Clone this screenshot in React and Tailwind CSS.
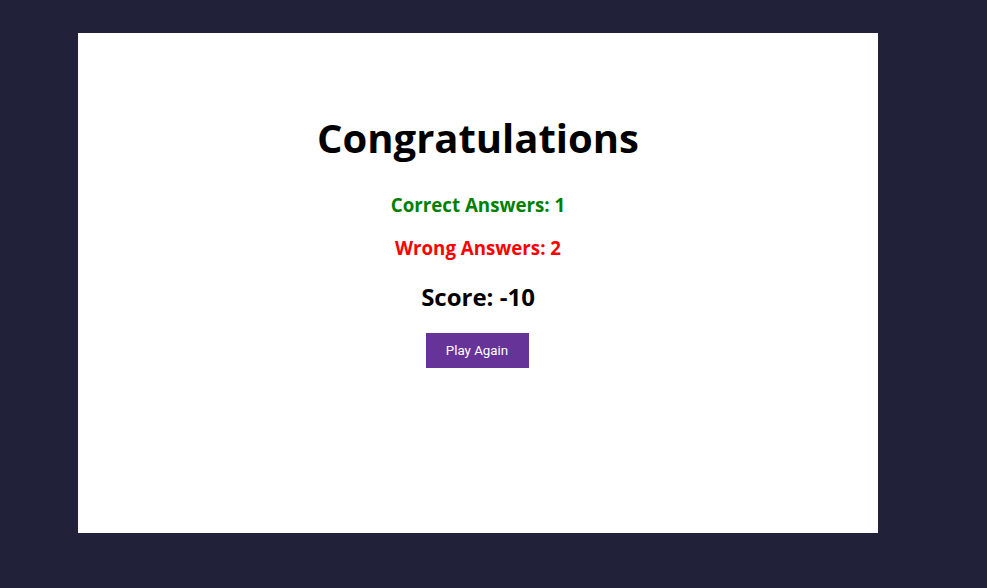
export default function App() {
  return (
    <div className="min-h-screen w-full bg-[#22213a] pt-[33px] pl-[78px]" style={{ fontFamily: "'Open Sans', sans-serif" }}>
      <div className="w-[800px] h-[500px] bg-white flex flex-col items-center pt-[81px]">
        <h1 className="text-[40px] leading-[48px] font-bold text-black">Congratulations</h1>
        <h3 className="mt-[29px] text-[18.72px] leading-[28px] font-bold text-[#008000]">Correct Answers: 1</h3>
        <h3 className="mt-[15px] text-[18.72px] leading-[28px] font-bold text-[#ff0000]">Wrong Answers: 2</h3>
        <h2 className="mt-[19px] text-[24px] leading-[32px] font-bold text-black">Score: -10</h2>
        <button
          className="mt-[20px] mr-[2px] w-[103px] h-[35px] bg-[#663399] text-white text-[13.33px]"
          style={{ fontFamily: "Roboto, sans-serif" }}
        >
          Play Again
        </button>
      </div>
    </div>
  );
}
